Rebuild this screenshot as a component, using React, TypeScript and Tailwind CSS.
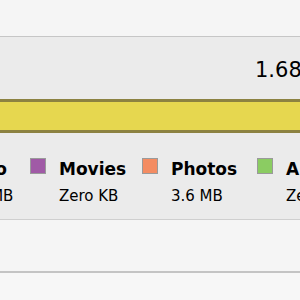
const legend = [
  { name: "Audio", size: "12.8 MB", color: "bg-[#5b8fd6]", w: "w-[107px]" },
  { name: "Movies", size: "Zero KB", color: "bg-[#a05aa6]", w: "w-[112px]" },
  { name: "Photos", size: "3.6 MB", color: "bg-[#f48c62]", w: "w-[115px]" },
  { name: "Apps", size: "Zero KB", color: "bg-[#8bcc62]", w: "w-[115px]" },
];

export default function App() {
  return (
    <div className="w-[300px] h-[300px] overflow-hidden bg-[#f6f6f6] font-['DejaVu_Sans',sans-serif] text-black">
      <div className="h-[37px] bg-[#f5f5f5] border-b border-[#c6c6c6]" />
      <div className="bg-[#ebebeb]">
        <div className="h-[62px] flex items-start overflow-hidden pt-[23px]">
          <span className="text-[21px] leading-none whitespace-nowrap ml-[255px]">1.68 GB</span>
        </div>
        <div className="h-[34px] bg-[#e6d74f] border-y-[3px] border-[#8c8241]" />
        <div className="h-[86px] flex overflow-hidden">
          <div className="flex ml-[-77px] pt-[25px]">
            {legend.map((item) => (
              <div key={item.name} className={`flex shrink-0 ${item.w}`}>
                <div className={`w-[16px] h-[16px] border border-[#9a9a9a] ${item.color}`} />
                <div className="ml-[13px] flex flex-col whitespace-nowrap">
                  <span className="text-[17px] font-bold leading-none mt-[3px]">{item.name}</span>
                  <span className="text-[15px] leading-none mt-[11px]">{item.size}</span>
                </div>
              </div>
            ))}
          </div>
        </div>
      </div>
      <div className="h-[52px] bg-[#f5f5f5] border-t border-[#cfcfcf]" />
      <div className="h-[2px] bg-[#c4c4c4]" />
      <div className="h-[30px] bg-[#f7f7f7]" />
    </div>
  );
}
